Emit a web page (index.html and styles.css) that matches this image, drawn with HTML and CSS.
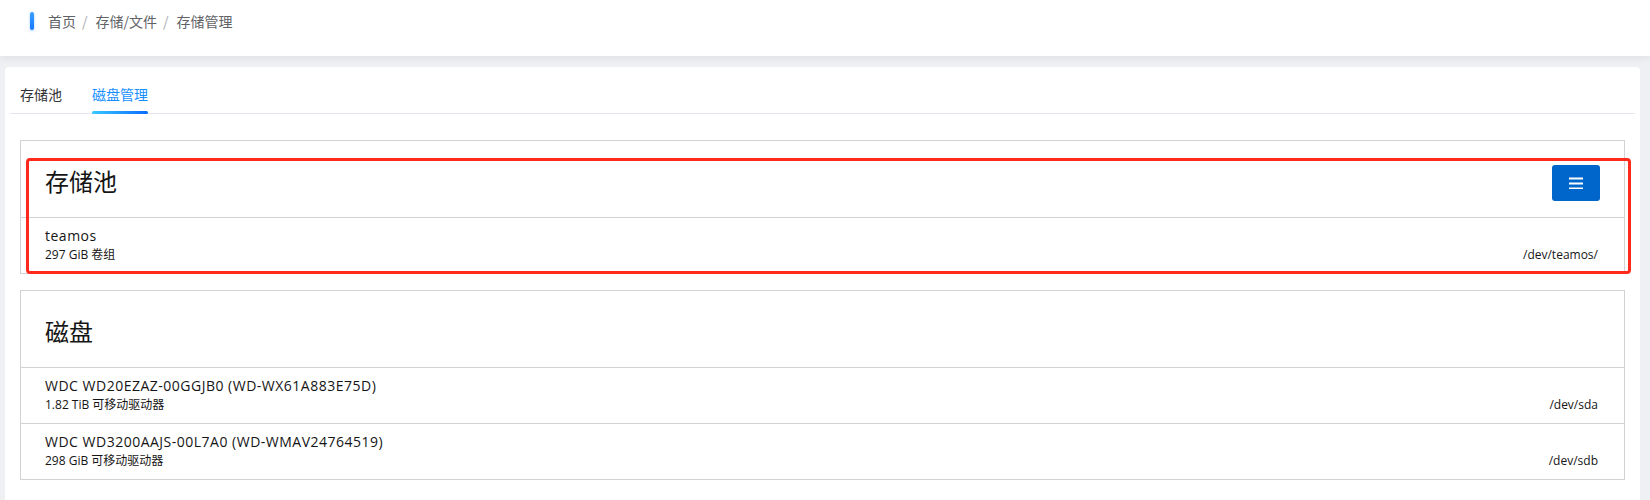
FILE: index.html
```html
<!DOCTYPE html>
<html lang="zh-CN">
<head>
<meta charset="utf-8">
<title>存储管理</title>
<link rel="stylesheet" href="styles.css">
</head>
<body>
<header class="topbar">
  <span class="topbar-mark"></span>
  <nav class="crumbs">
    <span class="crumb">首页</span><span class="sep">/</span>
    <span class="crumb">存储/文件</span><span class="sep">/</span>
    <span class="crumb current">存储管理</span>
  </nav>
</header>
<main class="card">
  <div class="tabs">
    <span class="tab">存储池</span>
    <span class="tab active">磁盘管理</span>
  </div>
  <div class="content">
    <section class="panel highlighted">
      <div class="panel-head">
        <h2 class="panel-title">存储池</h2>
        <button class="menu-btn" type="button" aria-label="菜单">
          <svg width="14" height="12" viewBox="0 0 14 12"><rect x="0" y="0.5" width="14" height="2" fill="#fff"/><rect x="0" y="5.5" width="14" height="2" fill="#fff"/><rect x="0" y="10.5" width="14" height="2" fill="#fff"/></svg>
        </button>
      </div>
      <div class="row">
        <div class="row-main">
          <div class="row-name">teamos</div>
          <div class="row-desc">297 GiB 卷组</div>
        </div>
        <div class="row-path">/dev/teamos/</div>
      </div>
      <span class="annot"></span>
    </section>
    <section class="panel">
      <div class="panel-head">
        <h2 class="panel-title">磁盘</h2>
      </div>
      <div class="row">
        <div class="row-main">
          <div class="row-name">WDC WD20EZAZ-00GGJB0 (WD-WX61A883E75D)</div>
          <div class="row-desc">1.82 TiB 可移动驱动器</div>
        </div>
        <div class="row-path">/dev/sda</div>
      </div>
      <div class="row">
        <div class="row-main">
          <div class="row-name">WDC WD3200AAJS-00L7A0 (WD-WMAV24764519)</div>
          <div class="row-desc">298 GiB 可移动驱动器</div>
        </div>
        <div class="row-path">/dev/sdb</div>
      </div>
    </section>
  </div>
</main>
</body>
</html>
```
FILE: styles.css
```css
* { box-sizing: border-box; }
html, body { margin: 0; padding: 0; }
body {
  background: #eff0f4;
  font-family: "Open Sans", "Noto Sans CJK SC", sans-serif;
  color: #151515;
  height: 500px;
  overflow: hidden;
}
.topbar {
  height: 56px;
  background: #fff;
  display: flex;
  align-items: flex-start;
  padding: 12px 0 0 30px;
  box-shadow: 0 2px 8px rgba(0, 0, 0, 0.07);
  position: relative;
  z-index: 1;
}
.topbar-mark {
  width: 4px;
  height: 18px;
  border-radius: 2px;
  background: linear-gradient(#3aa0ff, #1677ff);
  box-shadow: 0 1px 3px rgba(24, 144, 255, 0.4);
  margin-right: 14px;
}
.crumbs {
  font-family: "Noto Sans CJK SC", sans-serif;
  font-size: 14px;
  line-height: 18px;
  color: #606266;
  display: flex;
}
.sep { margin: 0 8px 0 6px; color: #a8abb2; }
.card {
  margin: 11px 10px 0 5px;
  background: #fff;
  border-radius: 4px;
  min-height: 460px;
}
.tabs {
  margin: 0 5px;
  height: 47px;
  border-bottom: 1px solid #e4e7ed;
  display: flex;
  gap: 30px;
  padding: 17px 0 0 10px;
  font-family: "Noto Sans CJK SC", sans-serif;
  font-size: 14px;
  line-height: 20px;
  color: #303133;
}
.tab { position: relative; height: 29px; }
.tab.active { color: #1890ff; }
.tab.active::after {
  content: "";
  position: absolute;
  left: 0;
  right: 0;
  bottom: -1px;
  height: 3px;
  border-radius: 2px;
  background: linear-gradient(90deg, #38c8ff, #0a6cff);
}
.content {
  padding: 26px 15px 20px 15px;
  display: flex;
  flex-direction: column;
  gap: 16px;
}
.panel {
  border: 1px solid #d2d2d2;
  background: #fff;
  position: relative;
}
.panel-head {
  height: 77px;
  border-bottom: 1px solid #d2d2d2;
  display: flex;
  align-items: center;
  justify-content: space-between;
  padding: 8px 24px 0 24px;
}
.panel-title {
  margin: -5px 0 0 0;
  font-family: "Noto Sans CJK SC", sans-serif;
  font-weight: 400;
  font-size: 24px;
  line-height: 30px;
  color: #151515;
}
.menu-btn {
  width: 48px;
  height: 36px;
  border: 0;
  border-radius: 3px;
  background: #0066cc;
  display: flex;
  align-items: center;
  justify-content: center;
  padding: 0;
}
.row {
  display: flex;
  justify-content: space-between;
  align-items: flex-end;
  padding: 8px 26px 9px 24px;
}
.row + .row { border-top: 1px solid #d2d2d2; }
.row-name { font-size: 14px; line-height: 20px; letter-spacing: 0.5px; }
.row-desc { font-size: 12px; line-height: 18px; }
.row-path { font-size: 12px; line-height: 18px; }
.annot {
  position: absolute;
  left: 5px;
  top: 17px;
  right: -7px;
  bottom: -1px;
  border: 3px solid #ff2a1c;
  border-radius: 4px;
  pointer-events: none;
}
```
